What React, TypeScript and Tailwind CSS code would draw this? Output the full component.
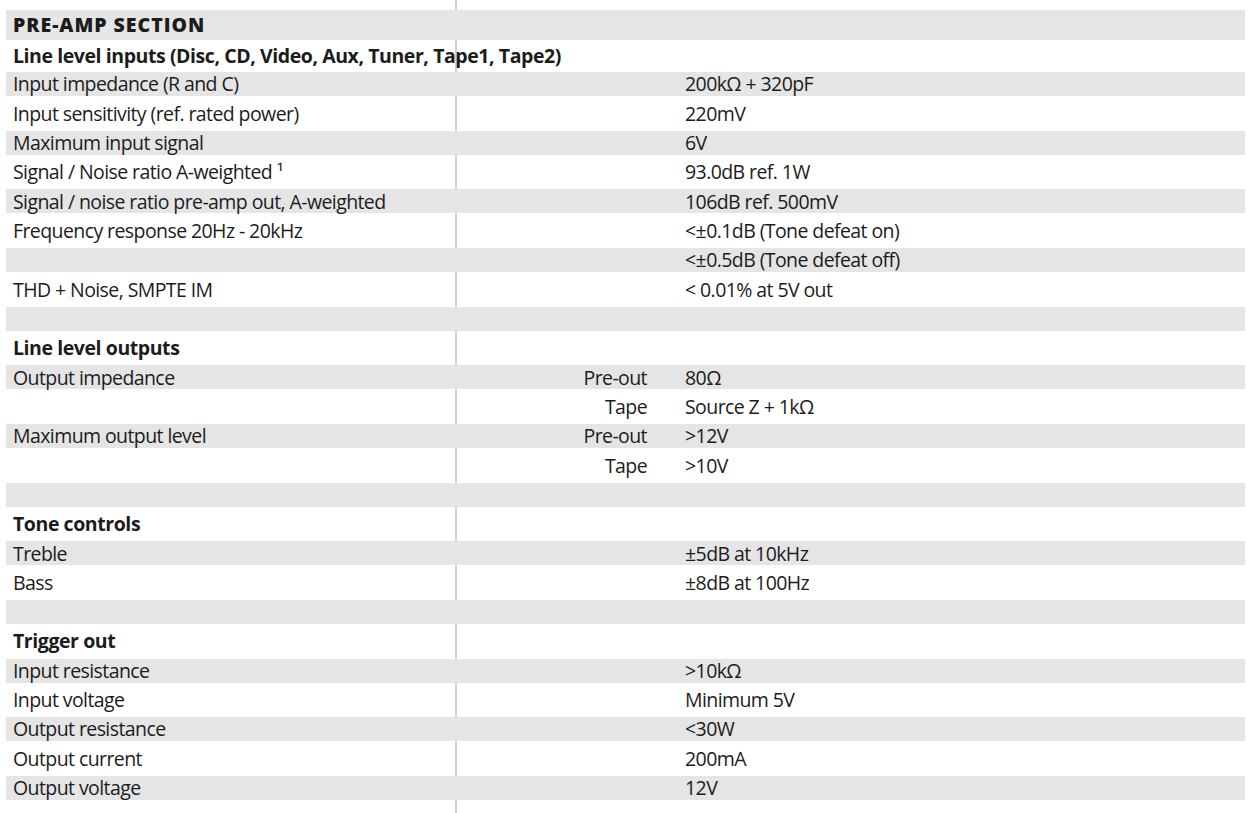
type Spec = {
  label?: string;
  sub?: string;
  value?: string;
  bold?: boolean;
};

const ROWS: Spec[] = [
  { label: "Input impedance (R and C)", value: "200kΩ + 320pF" },
  { label: "Input sensitivity (ref. rated power)", value: "220mV" },
  { label: "Maximum input signal", value: "6V" },
  { label: "Signal / Noise ratio A-weighted ¹", value: "93.0dB ref. 1W" },
  { label: "Signal / noise ratio pre-amp out, A-weighted", value: "106dB ref. 500mV" },
  { label: "Frequency response 20Hz - 20kHz", value: "<±0.1dB (Tone defeat on)" },
  { value: "<±0.5dB (Tone defeat off)" },
  { label: "THD + Noise, SMPTE IM", value: "< 0.01% at 5V out" },
  {},
  { label: "Line level outputs", bold: true },
  { label: "Output impedance", sub: "Pre-out", value: "80Ω" },
  { sub: "Tape", value: "Source Z + 1kΩ" },
  { label: "Maximum output level", sub: "Pre-out", value: ">12V" },
  { sub: "Tape", value: ">10V" },
  {},
  { label: "Tone controls", bold: true },
  { label: "Treble", value: "±5dB at 10kHz" },
  { label: "Bass", value: "±8dB at 100Hz" },
  {},
  { label: "Trigger out", bold: true },
  { label: "Input resistance", value: ">10kΩ" },
  { label: "Input voltage", value: "Minimum 5V" },
  { label: "Output resistance", value: "<30W" },
  { label: "Output current", value: "200mA" },
  { label: "Output voltage", value: "12V" },
];

function Spacer({ h }: { h: string }) {
  return (
    <div className={`ml-[6px] flex w-[1239px] ${h}`}>
      <div className="w-[451px] shrink-0 border-r-2 border-[#d2d2d2]" />
    </div>
  );
}

function Row({ spec, gray }: { spec: Spec; gray: boolean }) {
  return (
    <div
      className={
        gray
          ? "ml-[6px] flex h-[24px] w-[1239px] items-center bg-[#e5e5e5]"
          : "ml-[6px] flex h-[34.67px] w-[1239px] items-center"
      }
    >
      <div
        className={
          gray
            ? "flex h-full w-[451px] shrink-0 items-center whitespace-nowrap border-r-2 border-[#e5e5e5] pl-[7px]"
            : "flex h-full w-[451px] shrink-0 items-center whitespace-nowrap border-r-2 border-[#d2d2d2] pl-[7px]"
        }
      >
        {spec.bold ? (
          <span className="font-bold tracking-[-0.022em]">{spec.label}</span>
        ) : (
          <span>{spec.label}</span>
        )}
      </div>
      <div className="w-[190px] shrink-0 whitespace-nowrap text-right">{spec.sub}</div>
      <div className="whitespace-nowrap pl-[38px]">{spec.value}</div>
    </div>
  );
}

export default function App() {
  return (
    <div
      className="h-[813px] w-[1253px] overflow-hidden bg-white text-[19.5px] leading-none tracking-[-0.03em] text-[#1c1c1c]"
      style={{ fontFamily: "'Open Sans', 'Liberation Sans', sans-serif" }}
    >
      <Spacer h="h-[10px]" />
      <div className="ml-[6px] flex h-[30px] w-[1239px] items-center bg-[#e5e5e5] pl-[7px]">
        <span className="font-extrabold tracking-[0.05em]">PRE-AMP SECTION</span>
      </div>
      <div className="ml-[6px] flex h-[32px] w-[1239px] items-center">
        <div className="flex h-full w-[451px] shrink-0 items-center whitespace-nowrap border-r-2 border-[#d2d2d2] pl-[7px]">
          <span className="font-bold tracking-[-0.022em]">
            Line level inputs (Disc, CD, Video, Aux, Tuner, Tape1, Tape2)
          </span>
        </div>
      </div>
      {ROWS.map((spec, i) => (
        <Row key={i} spec={spec} gray={i % 2 === 0} />
      ))}
      <Spacer h="h-[13px]" />
    </div>
  );
}
